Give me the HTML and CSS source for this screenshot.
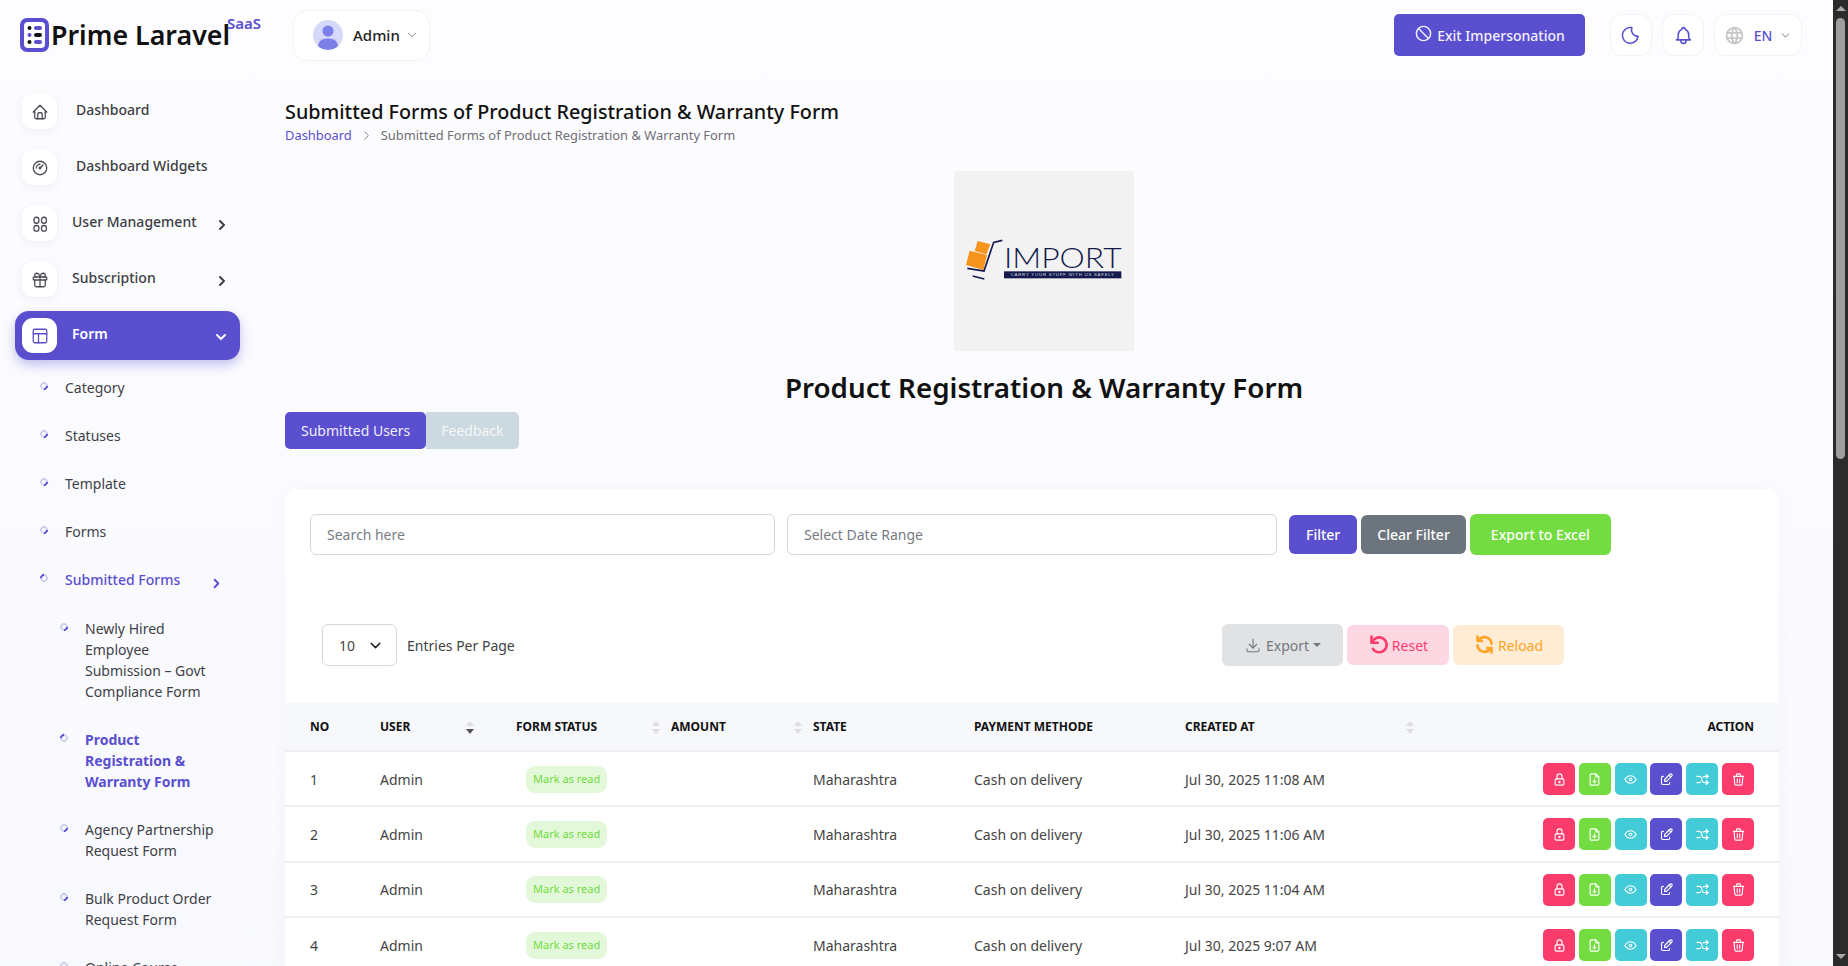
FILE: index.html
```html
<!DOCTYPE html>
<html lang="en">
<head>
  <meta charset="UTF-8">
  <meta name="viewport" content="width=device-width, initial-scale=1.0">
  <title>Submitted Forms</title>
  <link rel="stylesheet" href="styles.css">
</head>
<body>
  <svg class="sprite" xmlns="http://www.w3.org/2000/svg">
    <symbol id="i-home" viewBox="0 0 24 24"><path d="M5 12H3l9-9 9 9h-2"/><path d="M5 12v7a2 2 0 0 0 2 2h10a2 2 0 0 0 2-2v-7"/><path d="M9 21v-6a2 2 0 0 1 2-2h2a2 2 0 0 1 2 2v6"/></symbol>
    <symbol id="i-gauge" viewBox="0 0 24 24"><circle cx="12" cy="12" r="9"/><circle cx="12" cy="12" r="1"/><path d="M13.4 10.6 16 8"/><path d="M7 12a5 5 0 0 1 5-5"/></symbol>
    <symbol id="i-grid" viewBox="0 0 24 24"><rect x="4" y="3" width="6.5" height="8" rx="3"/><rect x="14" y="3" width="6.5" height="8" rx="3"/><rect x="4" y="14" width="6.5" height="7.5" rx="3"/><rect x="14" y="14" width="6.5" height="7.5" rx="3"/></symbol>
    <symbol id="i-gift" viewBox="0 0 24 24"><rect x="3" y="8" width="18" height="4" rx="1"/><path d="M12 8v13"/><path d="M19 12v7a2 2 0 0 1-2 2H7a2 2 0 0 1-2-2v-7"/><path d="M7.500 8a2.500 2.500 0 0 1 0-5A4.800 8 0 0 1 12 8a4.800 8 0 0 1 4.500-5 2.500 2.500 0 0 1 0 5"/></symbol>
    <symbol id="i-table" viewBox="0 0 24 24"><rect x="3" y="3" width="18" height="18" rx="2"/><path d="M3 9h18"/><path d="M10 9v12"/></symbol>
    <symbol id="i-ban" viewBox="0 0 24 24"><circle cx="12" cy="12" r="9"/><path d="m5.700 5.700 12.600 12.600"/></symbol>
    <symbol id="i-moon" viewBox="0 0 24 24"><path d="M12 3h.4a7.500 7.500 0 0 0 7.100 10A9 9 0 1 1 12 3z"/></symbol>
    <symbol id="i-bell" viewBox="0 0 24 24"><path d="M10 5a2 2 0 1 1 4 0 7 7 0 0 1 4 6v3a4 4 0 0 0 2 3H4a4 4 0 0 0 2-3v-3a7 7 0 0 1 4-6"/><path d="M9 17v1a3 3 0 0 0 6 0v-1"/></symbol>
    <symbol id="i-world" viewBox="0 0 24 24"><circle cx="12" cy="12" r="9"/><path d="M3.600 9h16.800"/><path d="M3.600 15h16.800"/><path d="M11.500 3a17 17 0 0 0 0 18"/><path d="M12.500 3a17 17 0 0 1 0 18"/></symbol>
    <symbol id="i-download" viewBox="0 0 24 24"><path d="M4 17v2a2 2 0 0 0 2 2h12a2 2 0 0 0 2-2v-2"/><path d="m7 11 5 5 5-5"/><path d="M12 4v12"/></symbol>
    <symbol id="i-undo" viewBox="0 0 24 24"><path d="M4 3v7h7"/><path d="M4.600 10a8.500 8.500 0 1 1 1 7"/></symbol>
    <symbol id="i-sync" viewBox="0 0 24 24"><path d="M20 11A8 8 0 0 0 5.500 7"/><path d="M4 3v5h5"/><path d="M4 13a8 8 0 0 0 14.500 4"/><path d="M20 21v-5h-5"/></symbol>
    <symbol id="i-lock" viewBox="0 0 24 24"><rect x="5" y="11" width="14" height="10" rx="2"/><circle cx="12" cy="16" r="1"/><path d="M8 11V7a4 4 0 1 1 8 0v4"/></symbol>
    <symbol id="i-file" viewBox="0 0 24 24"><path d="M14 3v4a1 1 0 0 0 1 1h4"/><path d="M17 21H7a2 2 0 0 1-2-2V5a2 2 0 0 1 2-2h7l5 5v11a2 2 0 0 1-2 2z"/><path d="M12 17v-6"/><path d="m9.500 14.500 2.500 2.500 2.500-2.500"/></symbol>
    <symbol id="i-eye" viewBox="0 0 24 24"><circle cx="12" cy="12" r="2"/><path d="M21 12c-2.400 4-5.400 6-9 6s-6.600-2-9-6c2.400-4 5.400-6 9-6s6.600 2 9 6"/></symbol>
    <symbol id="i-edit" viewBox="0 0 24 24"><path d="M7 7H6a2 2 0 0 0-2 2v9a2 2 0 0 0 2 2h9a2 2 0 0 0 2-2v-1"/><path d="M20.400 6.600a2.100 2.100 0 0 0-3-3L9 12v3h3z"/><path d="m16 5 3 3"/></symbol>
    <symbol id="i-shuffle" viewBox="0 0 24 24"><path d="m18 4 3 3-3 3"/><path d="m18 20 3-3-3-3"/><path d="M3 7h3a5 5 0 0 1 5 5 5 5 0 0 0 5 5h5"/><path d="M21 7h-5a5 5 0 0 0-3 1m-4 8a5 5 0 0 1-3 1H3"/></symbol>
    <symbol id="i-trash" viewBox="0 0 24 24"><path d="M4 7h16"/><path d="M10 11v6"/><path d="M14 11v6"/><path d="m5 7 1 12a2 2 0 0 0 2 2h8a2 2 0 0 0 2-2l1-12"/><path d="M9 7V4a1 1 0 0 1 1-1h4a1 1 0 0 1 1 1v3"/></symbol>
    <symbol id="i-down" viewBox="0 0 24 24"><path d="m6 9 6 6 6-6"/></symbol>
    <symbol id="i-right" viewBox="0 0 24 24"><path d="m9 6 6 6-6 6"/></symbol>
  </svg>

  <header class="topbar">
    <div class="brand">
      <svg class="brand-icon" viewBox="0 0 29 34">
        <rect width="29" height="34" rx="7" fill="#5a4fcf"/>
        <rect x="4" y="4" width="21" height="26" rx="4" fill="#fff"/>
        <circle cx="9.500" cy="10" r="2" fill="#111"/>
        <circle cx="9.500" cy="17" r="2" fill="#5a4fcf"/>
        <circle cx="9.500" cy="24" r="2" fill="#111"/>
        <rect x="14" y="8" width="8" height="4" rx="2" fill="#5a4fcf"/>
        <rect x="14" y="15" width="8" height="4" rx="2" fill="#111"/>
        <rect x="14" y="22" width="8" height="4" rx="2" fill="#5a4fcf"/>
      </svg>
      <span class="brand-name">Prime Laravel</span>
      <sup class="brand-tag">SaaS</sup>
    </div>
    <div class="user-menu">
      <div class="avatar">
        <svg viewBox="0 0 30 30"><circle cx="15" cy="11" r="5.500"/><path d="M5 27c0-6 4-8.500 10-8.500S25 21 25 27a15 15 0 0 1-20 0z"/></svg>
      </div>
      <span>Admin</span>
      <svg class="icon caret"><use href="#i-down"/></svg>
    </div>
    <div class="top-actions">
      <a class="exit-btn"><svg class="icon"><use href="#i-ban"/></svg>Exit Impersonation</a>
      <a class="round-btn"><svg class="icon"><use href="#i-moon"/></svg></a>
      <a class="round-btn"><svg class="icon"><use href="#i-bell"/></svg></a>
      <a class="round-btn lang">
        <svg class="icon globe"><use href="#i-world"/></svg>
        <span>EN</span>
        <svg class="icon caret"><use href="#i-down"/></svg>
      </a>
    </div>
  </header>

  <div class="layout">
    <aside class="sidebar">
      <nav class="nav">
        <a class="nav-item plain"><span class="nav-icon"><svg class="icon"><use href="#i-home"/></svg></span><span class="nav-label">Dashboard</span></a>
        <a class="nav-item plain"><span class="nav-icon"><svg class="icon"><use href="#i-gauge"/></svg></span><span class="nav-label">Dashboard Widgets</span></a>
        <a class="nav-item"><span class="nav-icon"><svg class="icon"><use href="#i-grid"/></svg></span><span class="nav-label">User Management</span><svg class="icon nav-arrow"><use href="#i-right"/></svg></a>
        <a class="nav-item"><span class="nav-icon"><svg class="icon"><use href="#i-gift"/></svg></span><span class="nav-label">Subscription</span><svg class="icon nav-arrow"><use href="#i-right"/></svg></a>
        <a class="nav-item active"><span class="nav-icon"><svg class="icon"><use href="#i-table"/></svg></span><span class="nav-label">Form</span><svg class="icon nav-arrow"><use href="#i-down"/></svg></a>
      </nav>
      <ul class="subnav">
        <li><i class="dot"></i><span>Category</span></li>
        <li><i class="dot"></i><span>Statuses</span></li>
        <li><i class="dot"></i><span>Template</span></li>
        <li><i class="dot"></i><span>Forms</span></li>
        <li class="open"><i class="dot"></i><span>Submitted Forms</span><svg class="icon sub-arrow"><use href="#i-right"/></svg></li>
      </ul>
      <ul class="subnav nested">
        <li><i class="dot"></i><span>Newly Hired Employee Submission – Govt Compliance Form</span></li>
        <li class="current"><i class="dot"></i><span>Product Registration &amp; Warranty Form</span></li>
        <li><i class="dot"></i><span>Agency Partnership Request Form</span></li>
        <li><i class="dot"></i><span>Bulk Product Order Request Form</span></li>
        <li><i class="dot"></i><span>Online Course Enrollment Form</span></li>
      </ul>
    </aside>

    <main class="main">
      <div class="page-head">
        <h1>Submitted Forms of Product Registration &amp; Warranty Form</h1>
        <div class="breadcrumb">
          <a>Dashboard</a>
          <svg class="icon"><use href="#i-right"/></svg>
          <span>Submitted Forms of Product Registration &amp; Warranty Form</span>
        </div>
      </div>

      <div class="form-hero">
        <svg class="form-logo" viewBox="42 33 540 540">
          <rect x="42" y="33" width="540" height="540" fill="#f2f2f2"/>
          <path d="M113 243l38 10-12 30-35-10z" fill="#f7941d"/>
          <path d="M89 272l52 13-11 45-52-15z" fill="#f7941d"/>
          <path d="M187 241l-26 6-29 86-50-8M98 348l35 9" fill="none" stroke="#141a4c" stroke-width="5"/>
          <text class="logo-word" x="192" y="323" textLength="353" lengthAdjust="spacingAndGlyphs">IMPORT</text>
          <rect x="192" y="334" width="352" height="21" fill="#141a4c"/>
          <text class="logo-tag" x="212" y="349" textLength="310">CARRY YOUR STUFF WITH US SAFELY</text>
        </svg>
        <h2>Product Registration &amp; Warranty Form</h2>
      </div>

      <div class="tabs">
        <a class="tab active">Submitted Users</a>
        <a class="tab">Feedback</a>
      </div>

      <section class="card">
        <div class="filters">
          <input class="field search" placeholder="Search here">
          <input class="field dates" placeholder="Select Date Range">
          <div class="filter-btns">
            <a class="btn slim primary">Filter</a>
            <a class="btn slim grey">Clear Filter</a>
            <a class="btn green">Export to Excel</a>
          </div>
        </div>

        <div class="table-tools">
          <div class="per-page">
            <div class="select"><span>10</span><svg class="icon"><use href="#i-down"/></svg></div>
            <span>Entries Per Page</span>
          </div>
          <div class="tool-btns">
            <a class="tool export"><svg class="icon"><use href="#i-download"/></svg>Export<i class="tool-caret"></i></a>
            <a class="tool reset"><svg class="icon"><use href="#i-undo"/></svg>Reset</a>
            <a class="tool reload"><svg class="icon"><use href="#i-sync"/></svg>Reload</a>
          </div>
        </div>

        <table class="data-table">
          <colgroup>
            <col class="col-no"><col class="col-user"><col class="col-status"><col class="col-amount">
            <col class="col-state"><col class="col-pay"><col class="col-date"><col>
          </colgroup>
          <thead>
            <tr>
              <th>NO</th>
              <th><div class="th-sort user">USER<i class="sort desc"></i></div></th>
              <th><div class="th-sort">FORM STATUS<i class="sort"></i></div></th>
              <th><div class="th-sort">AMOUNT<i class="sort"></i></div></th>
              <th>STATE</th>
              <th>PAYMENT METHODE</th>
              <th><div class="th-sort date">CREATED AT<i class="sort"></i></div></th>
              <th class="right">ACTION</th>
            </tr>
          </thead>
          <tbody>
            <tr>
              <td>1</td><td>Admin</td><td><span class="badge">Mark as read</span></td><td></td>
              <td>Maharashtra</td><td>Cash on delivery</td><td>Jul 30, 2025 11:08 AM</td>
              <td><div class="actions">
                <a class="act pink"><svg class="icon"><use href="#i-lock"/></svg></a><a class="act lime"><svg class="icon"><use href="#i-file"/></svg></a><a class="act cyan"><svg class="icon"><use href="#i-eye"/></svg></a><a class="act violet"><svg class="icon"><use href="#i-edit"/></svg></a><a class="act cyan"><svg class="icon"><use href="#i-shuffle"/></svg></a><a class="act pink"><svg class="icon"><use href="#i-trash"/></svg></a>
              </div></td>
            </tr>
            <tr>
              <td>2</td><td>Admin</td><td><span class="badge">Mark as read</span></td><td></td>
              <td>Maharashtra</td><td>Cash on delivery</td><td>Jul 30, 2025 11:06 AM</td>
              <td><div class="actions">
                <a class="act pink"><svg class="icon"><use href="#i-lock"/></svg></a><a class="act lime"><svg class="icon"><use href="#i-file"/></svg></a><a class="act cyan"><svg class="icon"><use href="#i-eye"/></svg></a><a class="act violet"><svg class="icon"><use href="#i-edit"/></svg></a><a class="act cyan"><svg class="icon"><use href="#i-shuffle"/></svg></a><a class="act pink"><svg class="icon"><use href="#i-trash"/></svg></a>
              </div></td>
            </tr>
            <tr>
              <td>3</td><td>Admin</td><td><span class="badge">Mark as read</span></td><td></td>
              <td>Maharashtra</td><td>Cash on delivery</td><td>Jul 30, 2025 11:04 AM</td>
              <td><div class="actions">
                <a class="act pink"><svg class="icon"><use href="#i-lock"/></svg></a><a class="act lime"><svg class="icon"><use href="#i-file"/></svg></a><a class="act cyan"><svg class="icon"><use href="#i-eye"/></svg></a><a class="act violet"><svg class="icon"><use href="#i-edit"/></svg></a><a class="act cyan"><svg class="icon"><use href="#i-shuffle"/></svg></a><a class="act pink"><svg class="icon"><use href="#i-trash"/></svg></a>
              </div></td>
            </tr>
            <tr>
              <td>4</td><td>Admin</td><td><span class="badge">Mark as read</span></td><td></td>
              <td>Maharashtra</td><td>Cash on delivery</td><td>Jul 30, 2025 9:07 AM</td>
              <td><div class="actions">
                <a class="act pink"><svg class="icon"><use href="#i-lock"/></svg></a><a class="act lime"><svg class="icon"><use href="#i-file"/></svg></a><a class="act cyan"><svg class="icon"><use href="#i-eye"/></svg></a><a class="act violet"><svg class="icon"><use href="#i-edit"/></svg></a><a class="act cyan"><svg class="icon"><use href="#i-shuffle"/></svg></a><a class="act pink"><svg class="icon"><use href="#i-trash"/></svg></a>
              </div></td>
            </tr>
          </tbody>
        </table>
      </section>
    </main>
  </div>

  <div class="scrollbar">
    <i class="arrow up"></i>
    <div class="thumb"></div>
    <i class="arrow down"></i>
  </div>
</body>
</html>
```

FILE: styles.css
```css
* {
  padding: 0;
  margin: 0;
  box-sizing: border-box;
  font-family: "Noto Sans", "Open Sans", sans-serif;
}

body {
  padding-right: 15px;
  background: linear-gradient(180deg, #fdfdff 0, #f8f9fe 966px);
  color: #444;
  font-size: 14px;
  line-height: 21px;
}

.sprite {
  display: none;
}

.icon {
  width: 20px;
  height: 20px;
  fill: none;
  stroke: currentColor;
  stroke-width: 1.5;
  stroke-linecap: round;
  stroke-linejoin: round;
  flex-shrink: 0;
}

/* window scrollbar */
.scrollbar {
  position: fixed;
  top: 0;
  right: 0;
  bottom: 0;
  width: 15px;
  padding: 6px 0 7px;
  display: flex;
  flex-direction: column;
  align-items: center;
  background-color: #2b2b2b;

  & > .thumb {
    width: 9px;
    height: 441px;
    margin-top: 7px;
    background-color: #9f9f9f;
    border-radius: 5px;
  }

  & > .arrow {
    border: 5px solid transparent;
    border-top: 0;
    border-bottom-color: #a8a8a8;

    &.down {
      margin-top: auto;
      border: 5px solid transparent;
      border-bottom: 0;
      border-top-color: #a8a8a8;
    }
  }
}

/* top bar */
.topbar {
  height: 70px;
  padding: 0 31px 0 20px;
  display: flex;
  align-items: center;
}

.brand {
  width: 273px;
  display: flex;
  align-items: center;
  gap: 2px;
  position: relative;
}

.brand-icon {
  width: 29px;
  height: 34px;
}

.brand-name {
  font-size: 26.800px;
  line-height: 34px;
  font-weight: 600;
  color: #111;
}

.brand-tag {
  font-size: 15px;
  line-height: 18px;
  font-weight: 600;
  color: #5a4fcf;
  align-self: flex-start;
  margin: -4px 0 0 -5px;
}

.user-menu {
  width: 137px;
  height: 51px;
  padding-left: 19px;
  display: flex;
  align-items: center;
  gap: 5px;
  background-color: #fff;
  border: 1px solid #f3f3f7;
  border-radius: 14px;
  font-size: 15px;
  font-weight: 500;
  color: #222;

  & > .avatar {
    width: 30px;
    height: 30px;
    margin-right: 5px;
    border-radius: 50%;
    overflow: hidden;
    background-color: #d5d8f8;

    & svg {
      display: block;
      fill: #7b80e8;
    }
  }

  & > .caret {
    width: 14px;
    height: 14px;
    color: #777;
  }
}

.top-actions {
  margin-left: auto;
  display: flex;
  align-items: center;
  gap: 10px;
}

.exit-btn {
  width: 191px;
  height: 42px;
  margin-right: 15px;
  display: flex;
  align-items: center;
  justify-content: center;
  gap: 4px;
  background-color: #5a4fcf;
  border-radius: 5px;
  color: #f2f1ff;
  font-weight: 500;

  & > .icon {
    width: 19px;
    height: 19px;
    margin-top: -4px;
    stroke-width: 1.800;
  }
}

.round-btn {
  width: 42px;
  height: 42px;
  display: flex;
  align-items: center;
  justify-content: center;
  background-color: #fff;
  border: 1px solid #f3f3f7;
  border-radius: 12px;
  color: #5a4fcf;

  & > .icon {
    width: 21px;
    height: 21px;
    stroke-width: 1.800;
  }

  &.lang {
    width: 88px;
    gap: 9px;
    font-weight: 500;

    & > .globe {
      color: #c6c6c6;
      stroke-width: 2;
    }

    & > .caret {
      width: 13px;
      height: 13px;
      margin-left: -2px;
      color: #777;
    }
  }
}

/* page columns */
.layout {
  display: flex;
}

.sidebar {
  width: 270px;
  flex-shrink: 0;
  padding-top: 17px;
}

.nav {
  margin-left: 15px;
  width: 225px;
  display: flex;
  flex-direction: column;
  gap: 7px;
}

.nav-item {
  height: 49px;
  padding: 0 10px 0 7px;
  display: flex;
  align-items: center;
  gap: 15px;
  border-radius: 14px;
  color: #3d3d45;
  font-weight: 500;

  & > .nav-icon {
    width: 35px;
    height: 35px;
    display: flex;
    align-items: center;
    justify-content: center;
    background-color: #fff;
    border-radius: 11px;
    box-shadow: 0 2px 10px rgba(60, 60, 100, 0.08);
    color: #4b4b57;

    & > .icon {
      width: 18px;
      height: 18px;
      stroke-width: 1.700;
    }
  }

  & > .nav-label {
    padding-bottom: 5px;
  }

  & > .nav-arrow {
    width: 16px;
    height: 16px;
    margin: 2px 0 0 auto;
    stroke-width: 3;
  }

  &.plain > .nav-label {
    margin-left: 4px;
  }

  &.active {
    background-color: #5a4fcf;
    box-shadow: 0 5px 12px rgba(90, 79, 207, 0.35);
    color: #fff;
    font-weight: 600;

    & > .nav-icon {
      color: #5a4fcf;
    }

    & > .nav-arrow {
      margin-right: 1px;
    }
  }
}

.subnav {
  list-style: none;
  margin-left: 40px;
  width: 190px;
  padding-top: 17px;
  display: flex;
  flex-direction: column;
  gap: 27px;

  & > li {
    display: flex;
    align-items: flex-start;
    gap: 17px;
    position: relative;
    color: #3f3f46;
  }

  & .dot {
    width: 8px;
    height: 8px;
    margin-top: 5px;
    flex-shrink: 0;
    border: 2px solid #cfd0ee;
    border-right-color: #5a4fcf;
    border-radius: 50%;
    transform: rotate(45deg);
  }

  & > .open {
    color: #5a4fcf;
    font-weight: 500;

    & > .dot {
      transform: rotate(-135deg);
    }
  }

  & > .current {
    color: #5a4fcf;
    font-weight: 700;

    & > .dot {
      transform: rotate(-135deg);
    }
  }

  & .sub-arrow {
    width: 15px;
    height: 15px;
    margin: 7px 6px 0 auto;
    stroke-width: 3;
  }

  &.nested {
    margin-left: 60px;
    width: 165px;
    padding-top: 27px;
  }
}

.main {
  flex: 1;
  min-width: 0;
  padding: 28px 54px 0 15px;
}

.page-head {
  & > h1 {
    font-size: 19.800px;
    line-height: 27px;
    font-weight: 500;
    color: #111;
  }

  & > .breadcrumb {
    display: flex;
    align-items: center;
    gap: 7px;
    font-size: 12.900px;
    line-height: 20px;
    color: #6f6f78;

    & > a {
      color: #5a4fcf;
    }

    & > .icon {
      width: 15px;
      height: 15px;
      stroke-width: 1.300;
    }
  }
}

.form-hero {
  display: flex;
  flex-direction: column;
  align-items: center;
  padding: 26px 0 0 24px;

  & > .form-logo {
    width: 180px;
    height: 180px;
  }

  & > h2 {
    margin-top: 15px;
    font-size: 27.750px;
    line-height: 42px;
    font-weight: 600;
    color: #111;
  }
}

.logo-word {
  font-family: "Lato", sans-serif;
  font-size: 84px;
  font-weight: 300;
  fill: #141a4c;
}

.logo-tag {
  font-family: "Liberation Sans", sans-serif;
  font-size: 13px;
  fill: #d6d8e6;
}

.tabs {
  display: flex;
  margin-top: 4px;
}

.tab {
  height: 37px;
  padding: 0 15px;
  display: flex;
  align-items: center;
  background-color: #cdd9e0;
  border-radius: 0 5px 5px 0;
  color: #f4f7f8;

  &.active {
    padding: 0 16px;
    background-color: #5a4fcf;
    border-radius: 5px;
    color: #eeedff;
  }
}

.card {
  margin-top: 40px;
  min-height: 1000px;
  background-color: #fff;
  border-radius: 12px;
  box-shadow: 0 2px 14px rgba(80, 80, 140, 0.04);
}

.filters {
  padding: 25px 25px 0;
  display: flex;
  align-items: center;
  gap: 12px;
}

.field {
  height: 41px;
  padding: 0 16px 1px;
  background-color: #fff;
  border: 1px solid #d3d7de;
  border-radius: 6px;
  font-size: 14px;
  color: #444;
  outline: none;

  &::placeholder {
    color: #777c84;
  }

  &.search {
    width: 465px;
  }

  &.dates {
    width: 490px;
  }
}

.filter-btns {
  display: flex;
  align-items: center;
  gap: 4px;
}

.btn {
  height: 41px;
  padding: 0 21px;
  display: flex;
  align-items: center;
  border-radius: 6px;
  color: #fff;
  font-weight: 500;

  &.slim {
    height: 39px;
    padding: 0 17px;
  }

  &.primary {
    background-color: #5a4fcf;
  }

  &.grey {
    padding: 0 16px;
    background-color: #6c757d;
  }

  &.green {
    background-color: #72dc41;
  }
}

.table-tools {
  margin-top: 69px;
  padding: 0 215px 0 37px;
  display: flex;
  align-items: center;
  justify-content: space-between;
}

.per-page {
  display: flex;
  align-items: center;
  gap: 10px;

  & > .select {
    width: 75px;
    height: 42px;
    padding: 0 12px 0 16px;
    display: flex;
    align-items: center;
    justify-content: space-between;
    border: 1px solid #d3d7de;
    border-radius: 6px;

    & > .icon {
      width: 17px;
      height: 17px;
      color: #222;
      stroke-width: 2;
    }
  }
}

.tool-btns {
  display: flex;
  align-items: center;
  gap: 4px;
}

.tool {
  height: 40px;
  display: flex;
  align-items: center;
  justify-content: center;
  gap: 3px;
  border-radius: 6px;

  &.export {
    width: 121px;
    height: 42px;
    gap: 4px;
    background-color: #e1e2e4;
    color: #73787e;

    & > .icon {
      width: 18px;
      height: 18px;
    }
  }

  &.reset {
    width: 102px;
    background-color: #fdd8e2;
    color: #fa3c6d;
  }

  &.reload {
    width: 111px;
    background-color: #feecd5;
    color: #ffa426;
  }

  &.reset > .icon,
  &.reload > .icon {
    width: 21px;
    height: 21px;
    stroke-width: 3;
    margin-top: -2px;
  }

  & > .tool-caret {
    border: 4px solid transparent;
    border-top-color: #73787e;
    border-bottom: 0;
  }
}

.data-table {
  width: 100%;
  margin-top: 37px;
  table-layout: fixed;
  border-collapse: collapse;

  & .col-no {
    width: 95px;
  }

  & .col-user {
    width: 136px;
  }

  & .col-status {
    width: 155px;
  }

  & .col-amount {
    width: 142px;
  }

  & .col-state {
    width: 161px;
  }

  & .col-pay {
    width: 211px;
  }

  & .col-date {
    width: 265px;
  }

  & th {
    height: 48px;
    background-color: #f7f8fc;
    border-bottom: 2px solid #f0f0f3;
    font-size: 12px;
    font-weight: 700;
    color: #111;
    text-align: left;
  }

  & td {
    height: 55.300px;
    padding-top: 1px;
    border-bottom: 2px solid #f0f0f3;
    font-size: 14px;
    color: #444;
  }

  & th:first-child,
  & td:first-child {
    padding-left: 25px;
  }

  & th.right {
    padding-right: 25px;
    text-align: right;
  }

  & .th-sort {
    display: flex;
    align-items: center;
    justify-content: space-between;
    padding-right: 11px;

    &.user {
      padding-right: 42px;
    }

    &.date {
      padding-right: 36px;
    }
  }
}

.sort {
  display: flex;
  flex-direction: column;
  gap: 3px;
  margin-top: 2px;

  &::before,
  &::after {
    content: "";
    display: block;
    border: 4px solid transparent;
    border-top: 0;
    border-bottom: 5px solid #dcdde3;
  }

  &::after {
    border-top: 5px solid #dcdde3;
    border-bottom: 0;
  }

  &.desc::after {
    border-top-color: #555;
  }
}

.badge {
  display: inline-block;
  margin-left: 10px;
  padding: 0 7px;
  height: 27px;
  line-height: 26px;
  background-color: #e3f8d9;
  border-radius: 9px;
  font-size: 11px;
  color: #72dc41;
}

.actions {
  padding-right: 25px;
  display: flex;
  justify-content: flex-end;
  gap: 3.800px;
}

.act {
  width: 32px;
  height: 32px;
  display: flex;
  align-items: center;
  justify-content: center;
  border-radius: 5px;
  color: #fff;

  & > .icon {
    width: 15px;
    height: 15px;
    stroke-width: 1.800;
  }

  &.pink {
    background-color: #fa3c6d;
  }

  &.lime {
    background-color: #72dc41;
  }

  &.cyan {
    background-color: #44cbd8;
  }

  &.violet {
    background-color: #5a4fcf;
  }
}
```
